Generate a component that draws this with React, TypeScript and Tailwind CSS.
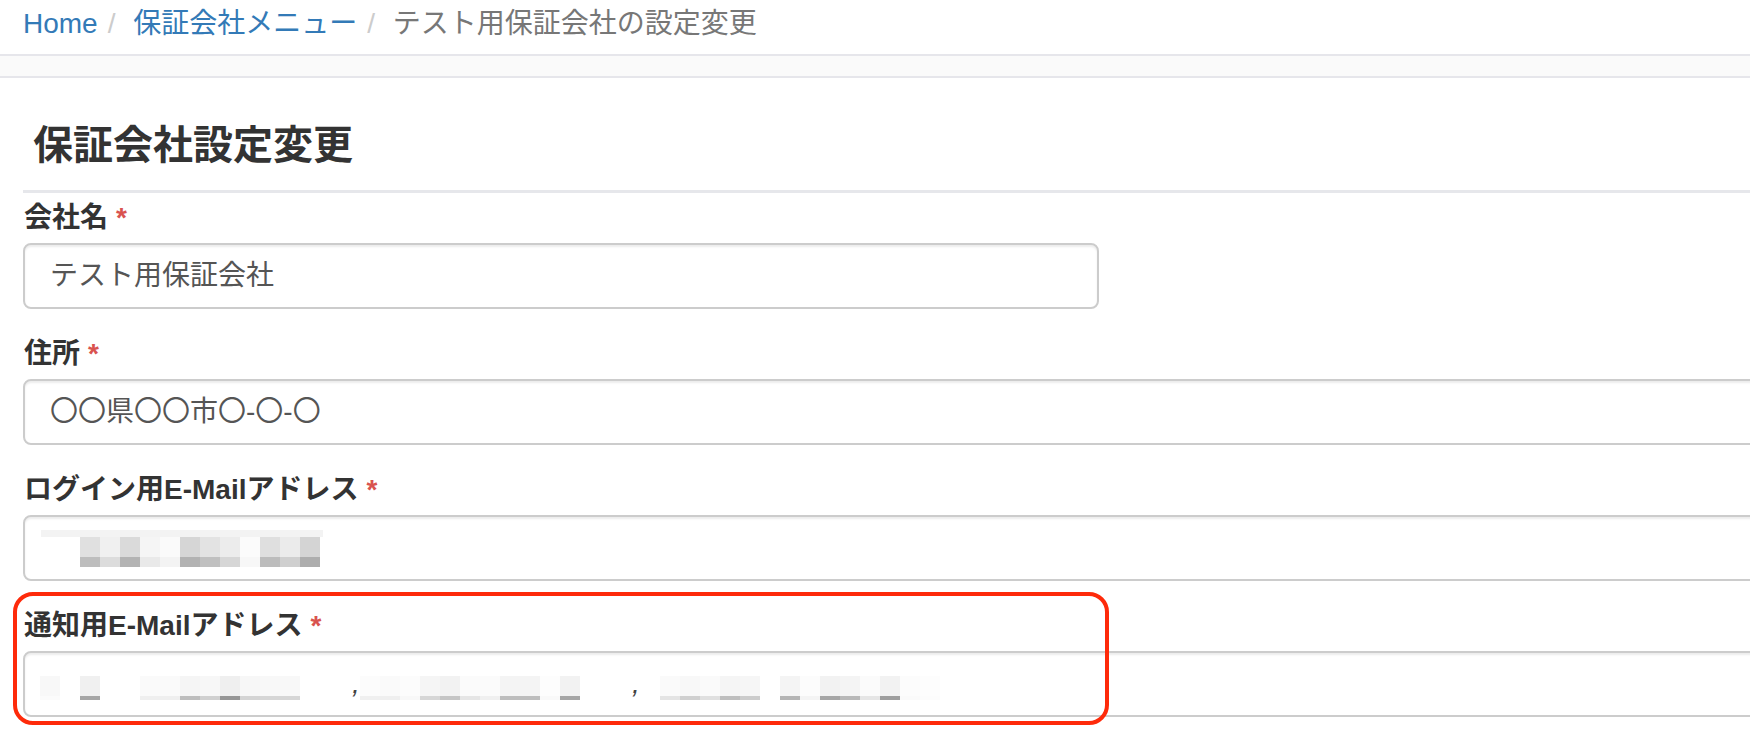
import React from "react";

type Cell = [string, string] | null | "comma";

const loginTop = [
  "#e0e0e0", "#f0f0f0", "#dadada", "#f5f5f5", "#fafafa", "#d6d6d6",
  "#e3e3e3", "#ececec", "#fbfbfb", "#dfdfdf", "#ebebeb", "#d4d4d4",
];
const loginBottom = [
  "#bdbdbd", "#dcdcdc", "#b3b3b3", "#e9e9e9", "#f3f3f3", "#b2b2b2",
  "#c0c0c0", "#d6d6d6", "#f7f7f7", "#bcbcbc", "#cfcfcf", "#adadad",
];

const notifyCells: Cell[] = [
  ["#f8f8f8", "#fbfbfb"],
  null,
  ["#f0f0f0", "#a6a6a6"],
  null,
  null,
  ["#fafafa", "#efefef"],
  ["#fafafa", "#efefef"],
  ["#f5f5f5", "#bdbdbd"],
  ["#f7f7f7", "#d0d0d0"],
  ["#efefef", "#969696"],
  ["#f7f7f7", "#d4d4d4"],
  ["#f8f8f8", "#d6d6d6"],
  ["#f8f8f8", "#d6d6d6"],
  null,
  null,
  "comma",
  ["#fcfcfc", "#f0f0f0"],
  ["#fafafa", "#efefef"],
  ["#fcfcfc", "#f8f8f8"],
  ["#f5f5f5", "#d6d6d6"],
  ["#f2f2f2", "#c5c5c5"],
  ["#fbfbfb", "#e6e6e6"],
  ["#fbfbfb", "#f0f0f0"],
  ["#f4f4f4", "#bdbdbd"],
  ["#f4f4f4", "#bdbdbd"],
  ["#fdfdfd", "#f9f9f9"],
  ["#f2f2f2", "#a6a6a6"],
  null,
  null,
  "comma",
  null,
  ["#fafafa", "#e4e4e4"],
  ["#f8f8f8", "#d0d0d0"],
  ["#fafafa", "#e0e0e0"],
  ["#f5f5f5", "#bebebe"],
  ["#f6f6f6", "#cccccc"],
  null,
  ["#f4f4f4", "#b4b4b4"],
  ["#fcfcfc", "#f4f4f4"],
  ["#f2f2f2", "#a6a6a6"],
  ["#f4f4f4", "#b8b8b8"],
  ["#fbfbfb", "#e6e6e6"],
  ["#f2f2f2", "#9e9e9e"],
  ["#fcfcfc", "#fafafa"],
  ["#fdfdfd", "#fcfcfc"],
];

function Label({ text }: { text: string }) {
  return (
    <div className="mb-[5px] h-[40px] pl-[1px] text-[28px] font-bold leading-[40px] text-[#333]">
      {text}
      <span className="ml-[8px] text-[#d9534f]">*</span>
    </div>
  );
}

const inputBase =
  "h-[66px] rounded-[8px] border-2 border-[#cccccc] bg-white shadow-[inset_0_2px_2px_rgba(0,0,0,0.075)]";

export default function App() {
  return (
    <div className="h-[742px] w-[1750px] overflow-hidden bg-white font-['Liberation_Sans','Noto_Sans_CJK_JP',sans-serif]">
      {/* breadcrumb */}
      <nav className="flex h-[54px] pl-[23px] pt-[4px] text-[28px] leading-[40px]">
        <span className="text-[#337ab7]">Home</span>
        <span className="px-[10px] text-[#cccccc]">/&nbsp;</span>
        <span className="text-[#337ab7]">保証会社メニュー</span>
        <span className="px-[10px] text-[#cccccc]">/&nbsp;</span>
        <span className="text-[#777777]">テスト用保証会社の設定変更</span>
      </nav>
      <div className="h-[24px] border-y-2 border-[#e6e6eb] bg-[#fafafa]" />

      <main className="w-[1800px] pl-[23px]">
        <h1 className="mb-[17px] mt-[39px] pl-[10px] text-[40px] font-bold leading-[56px] text-[#333]">
          保証会社設定変更
        </h1>
        <div className="mb-[5px] h-[3px] bg-[#e6e7eb]" />

        {/* 会社名 */}
        <div className="mb-[25px]">
          <Label text="会社名" />
          <div className={`${inputBase} flex w-[1076px] items-center pl-[25px] text-[28px] text-[#555]`}>
            テスト用保証会社
          </div>
        </div>

        {/* 住所 */}
        <div className="mb-[25px]">
          <Label text="住所" />
          <div className={`${inputBase} flex w-[1760px] items-center pl-[25px] text-[28px] text-[#555]`}>
            〇〇県〇〇市〇-〇-〇
          </div>
        </div>

        {/* ログイン用 */}
        <div className="mb-[25px]">
          <Label text="ログイン用E-Mailアドレス" />
          <div className={`${inputBase} w-[1760px] pl-[16px] pt-[13px]`}>
            <div className="h-[7px] w-[282px] bg-[#f3f3f3]" />
            <div className="ml-[39px] flex">
              {loginTop.map((c, i) => (
                <div key={i} className="flex w-[20px] flex-col">
                  <div className="h-[20px]" style={{ backgroundColor: c }} />
                  <div className="h-[10px]" style={{ backgroundColor: loginBottom[i] }} />
                </div>
              ))}
            </div>
          </div>
        </div>

        {/* 通知用 */}
        <div className="relative">
          <Label text="通知用E-Mailアドレス" />
          <div className={`${inputBase} w-[1760px] pl-[15px] pt-[23px]`}>
            <div className="flex">
              {notifyCells.map((c, i) => {
                if (c === null) return <div key={i} className="h-[24px] w-[20px]" />;
                if (c === "comma")
                  return (
                    <div key={i} className="h-[24px] w-[20px] pl-[12px] text-[28px] italic leading-[16px] text-[#444]">
                      ,
                    </div>
                  );
                return (
                  <div key={i} className="flex w-[20px] flex-col">
                    <div className="h-[20px]" style={{ backgroundColor: c[0] }} />
                    <div className="h-[4px]" style={{ backgroundColor: c[1] }} />
                  </div>
                );
              })}
            </div>
          </div>
          <div className="pointer-events-none absolute left-[-10px] top-[-14px] h-[133px] w-[1096px] rounded-[20px] border-4 border-[#fe2a0a]" />
        </div>
      </main>
    </div>
  );
}
